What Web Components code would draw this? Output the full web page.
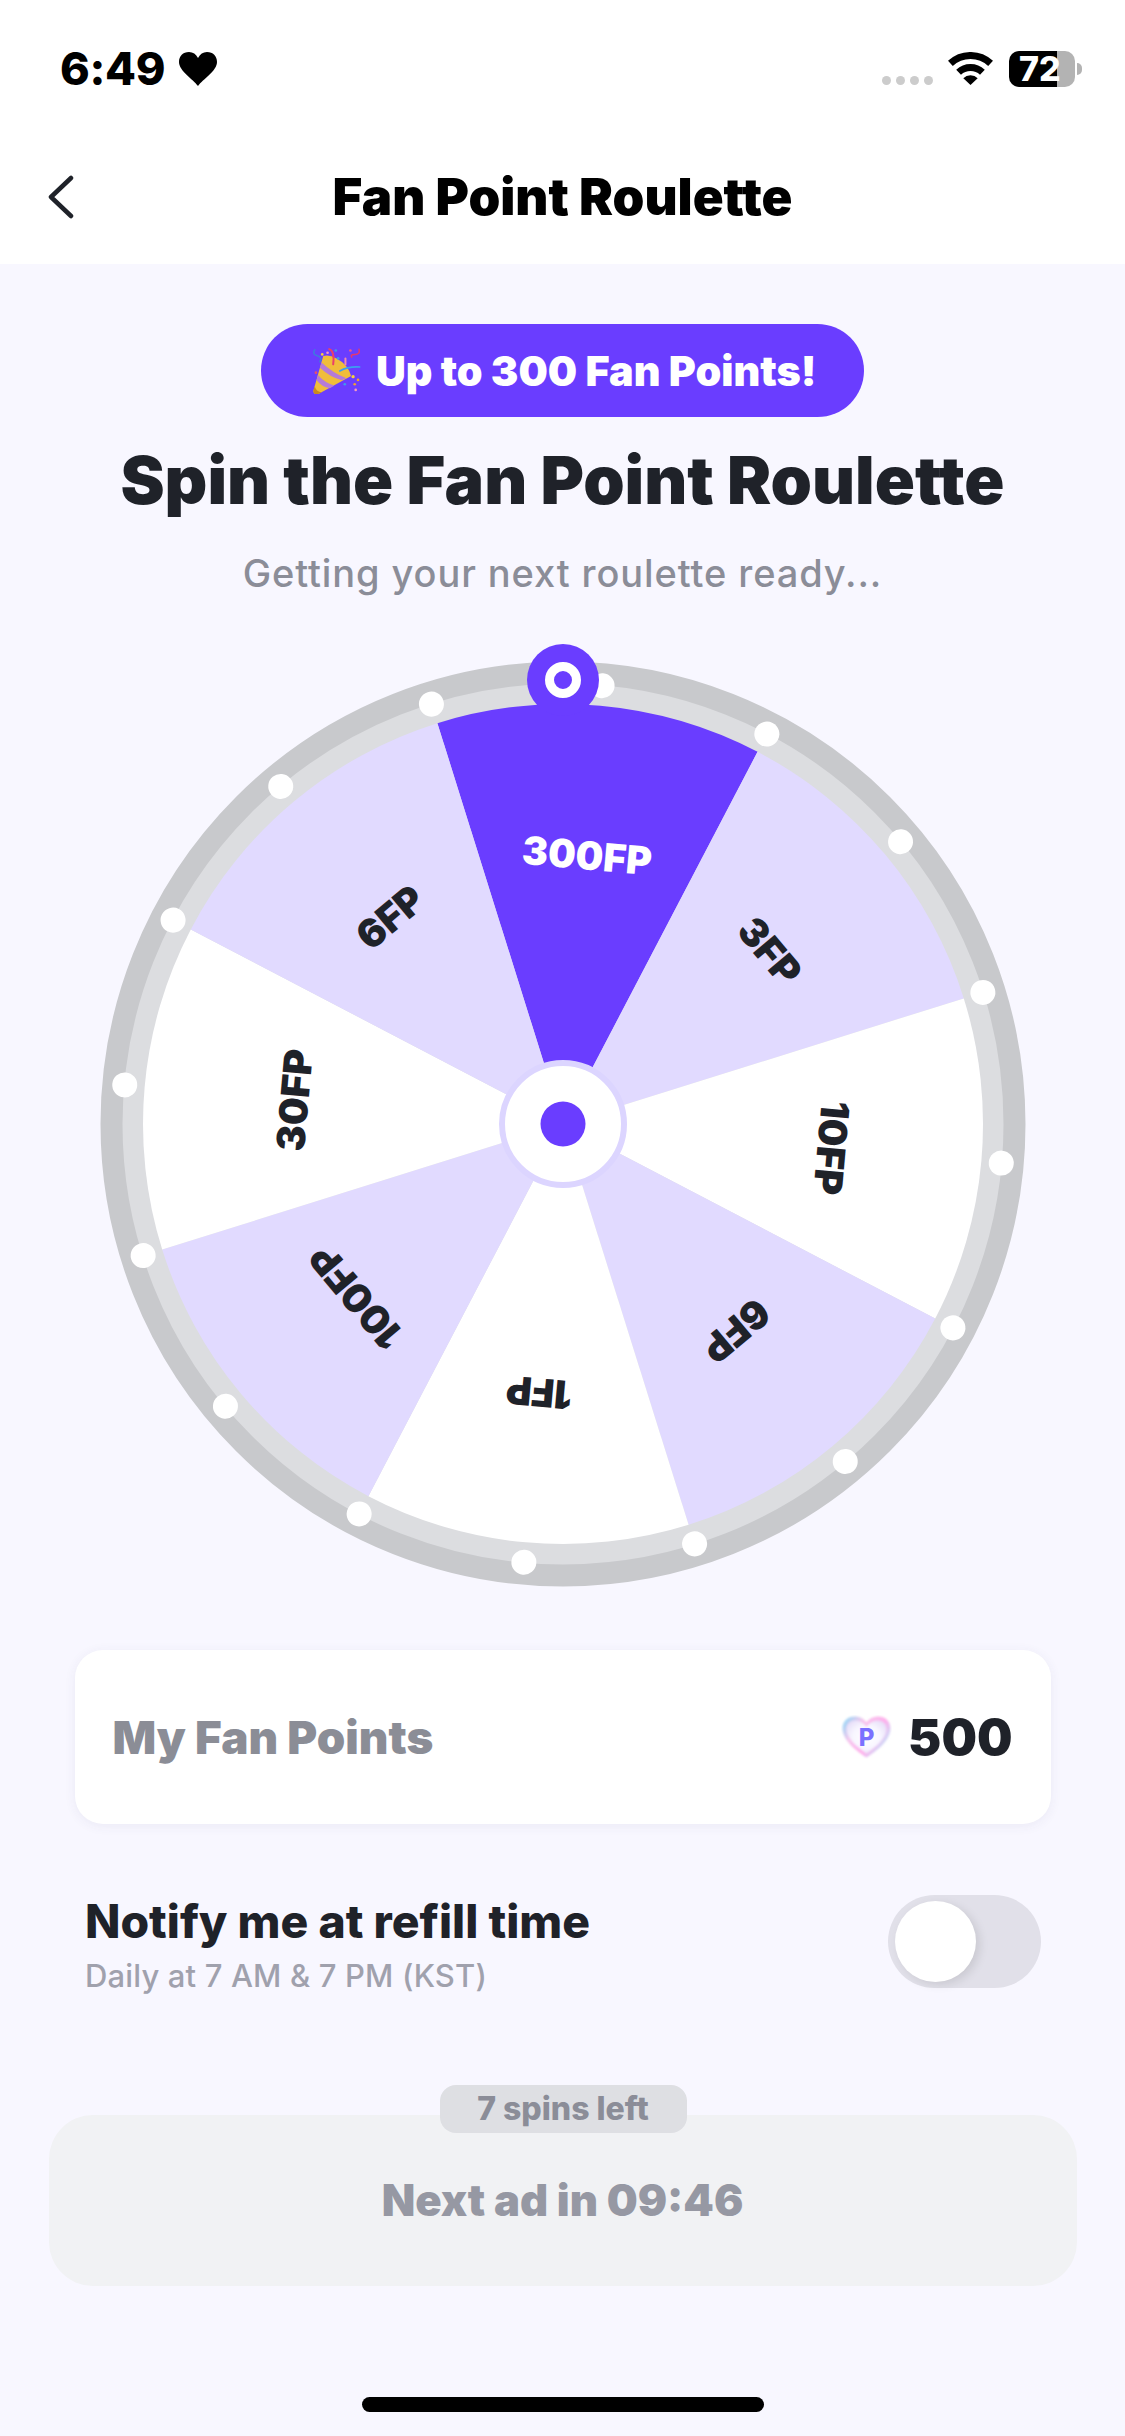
<!DOCTYPE html>
<html lang="en">
<head>
<meta charset="utf-8">
<title>Fan Point Roulette</title>
<style>
  html, body { margin: 0; padding: 0; background: #f8f7ff; }
  body { width: 1125px; height: 2436px; overflow: hidden; font-family: Inter, "Liberation Sans", sans-serif; }
  main { display: flex; flex-direction: column; align-items: center; }
</style>
</head>
<body>
<status-bar time="6:49" battery="72"></status-bar>
<nav-bar>Fan Point Roulette</nav-bar>
<main>
  <promo-pill>Up to 300 Fan Points!</promo-pill>
  <hero-title sub="Getting your next roulette ready...">Spin the Fan Point Roulette</hero-title>
  <fan-wheel></fan-wheel>
  <points-card points="500">My Fan Points</points-card>
  <notify-row sub="Daily at 7 AM &amp; 7 PM (KST)">Notify me at refill time</notify-row>
  <ad-button badge="7 spins left">Next ad in 09:46</ad-button>
</main>
<home-bar></home-bar>

<script>
const FONT = 'Inter, "Liberation Sans", sans-serif';

class StatusBar extends HTMLElement {
  connectedCallback() {
    const time = this.getAttribute('time');
    const battery = this.getAttribute('battery');
    this.attachShadow({ mode: 'open' }).innerHTML = `
      <style>
        :host { display: flex; align-items: flex-start; justify-content: space-between; height: 129px; background: #fff; padding: 51px 43px 0 60px; box-sizing: border-box; font-family: ${FONT}; color: #000; }
        .left { display: flex; align-items: center; gap: 14px; height: 36px; }
        .time { font-size: 45px; font-weight: 800; line-height: 36px; letter-spacing: -0.3px; }
        .right { display: flex; align-items: flex-start; }
        .dots { display: flex; gap: 5px; margin-top: 25px; }
        .dots i { width: 9px; height: 9px; border-radius: 50%; background: #ccc; }
        .wifi { margin: 1px 16px 0 15px; }
        .battery { width: 66px; height: 36px; border-radius: 10px; background: linear-gradient(to right, #000 73%, #b3b3b3 73%); color: #fff; font-size: 34px; font-weight: 800; line-height: 36px; padding-left: 10px; box-sizing: border-box; }
        .nub { width: 5px; height: 12px; margin: 12px 0 0 2px; background: #b3b3b3; border-radius: 0 6px 6px 0; }
      </style>
      <div class="left">
        <span class="time">${time}</span>
        <svg width="38" height="34" viewBox="0 0 38 34"><path d="M19 34C14 27 0 19 0 10 0 4 4 0 10 0c4 0 7 2 9 6 2-4 5-6 9-6 6 0 10 4 10 10 0 9-14 17-19 24z" fill="#000"/></svg>
      </div>
      <div class="right">
        <div class="dots"><i></i><i></i><i></i><i></i></div>
        <svg class="wifi" width="45" height="33" viewBox="0 0 45 33" fill="none" stroke="#000">
          <path d="M2.4 11.4A29.5 29.5 0 0 1 42.6 11.4" stroke-width="7"/>
          <path d="M10.6 20.2A17.5 17.5 0 0 1 34.4 20.2" stroke-width="7"/>
          <path d="M22.5 33L15.3 26.2A10 10 0 0 1 29.7 26.2Z" fill="#000" stroke="none"/>
        </svg>
        <div class="battery">${battery}</div>
        <div class="nub"></div>
      </div>`;
  }
}

class NavBar extends HTMLElement {
  constructor() {
    super();
    this.attachShadow({ mode: 'open' }).innerHTML = `
      <style>
        :host { display: flex; align-items: center; justify-content: center; position: relative; height: 135px; box-sizing: border-box; background: #fff; font-family: ${FONT}; }
        .title { font-size: 51px; font-weight: 900; color: #000; }
        svg { position: absolute; left: 46px; top: 46px; }
      </style>
      <svg width="28" height="44" viewBox="0 0 28 44" fill="none"><path d="M25 3L5 22l20 19" stroke="#1f2229" stroke-width="4.5" stroke-linecap="round" stroke-linejoin="round"/></svg>
      <div class="title"><slot></slot></div>`;
  }
}

class PromoPill extends HTMLElement {
  constructor() {
    super();
    this.attachShadow({ mode: 'open' }).innerHTML = `
      <style>
        :host { display: flex; align-items: center; gap: 13px; box-sizing: border-box; width: 603px; height: 93px; margin-top: 60px; padding-left: 49px; border-radius: 47px; background: #6a3dff; color: #fff; font-family: ${FONT}; font-size: 41.3px; font-weight: 900; white-space: nowrap; }
      </style>
      <svg width="53" height="50" viewBox="90 75 160 150">
        <path d="M130 105L100 210Q102 224 118 218L214 165Q205 130 170 112 148 100 130 105Z" fill="#f0bd3a"/>
        <path d="M100 210Q102 224 118 218L125 214Q110 214 104 196Z" fill="#c98a1e"/>
        <path d="M120 140Q150 168 186 178L200 172Q158 155 125 124Z" fill="#b57bd8"/>
        <path d="M110 178Q125 198 150 202L164 194Q135 186 114 162Z" fill="#b57bd8"/>
        <path d="M148 84Q165 90 160 130" fill="none" stroke="#ea3f6b" stroke-width="6" stroke-linecap="round"/>
        <path d="M104 86Q96 100 112 104T120 122" fill="none" stroke="#3f78e0" stroke-width="5" stroke-linecap="round"/>
        <path d="M180 150Q205 136 240 138" fill="none" stroke="#3ba0f0" stroke-width="5" stroke-linecap="round"/>
        <path d="M238 84Q242 100 226 100T216 108" fill="none" stroke="#e8386a" stroke-width="4.5" stroke-linecap="round"/>
        <path d="M197 112V130" stroke="#f08bb0" stroke-width="6" stroke-linecap="round"/>
        <g>
          <circle cx="127" cy="100" r="4" fill="#f7d23e"/><circle cx="220" cy="167" r="5" fill="#f7d23e"/>
          <circle cx="235" cy="177" r="4" fill="#f0a030"/><circle cx="225" cy="190" r="4" fill="#f0a030"/>
          <circle cx="228" cy="207" r="4" fill="#f59ac0"/><circle cx="212" cy="88" r="4" fill="#ec5a8a"/>
          <circle cx="143" cy="95" r="4" fill="#f59ac0"/><circle cx="168" cy="88" r="4" fill="#3f9be8"/>
          <circle cx="175" cy="112" r="4" fill="#3f9be8"/><circle cx="195" cy="190" r="4" fill="#3f9be8"/>
          <circle cx="108" cy="155" r="4" fill="#e8506a"/>
        </g>
      </svg>
      <span><slot></slot></span>`;
  }
}

class HeroTitle extends HTMLElement {
  connectedCallback() {
    this.attachShadow({ mode: 'open' }).innerHTML = `
      <style>
        :host { display: flex; flex-direction: column; align-items: center; font-family: ${FONT}; white-space: nowrap; }
        h1 { margin: 24px 0 0; font-size: 66.3px; line-height: 78px; font-weight: 900; color: #1f2229; }
        p { margin: 32px 0 0; font-size: 38px; line-height: 44px; font-weight: 500; color: #8b8d98; letter-spacing: 0.9px; }
      </style>
      <h1><slot></slot></h1>
      <p>${this.getAttribute('sub')}</p>`;
  }
}

class FanWheel extends HTMLElement {
  connectedCallback() {
    const cx = 480, cy = 483, R = 420, offset = 5.1;
    const rad = a => (a - 90) * Math.PI / 180;
    const pt = (r, a) => `${(cx + r * Math.cos(rad(a))).toFixed(2)} ${(cy + r * Math.sin(rad(a))).toFixed(2)}`;
    const sectors = [
      ['300FP', '#6a3dff', '#fff'],
      ['3FP', '#e1daff', '#1f2229'],
      ['10FP', '#fff', '#1f2229'],
      ['6FP', '#e1daff', '#1f2229'],
      ['1FP', '#fff', '#1f2229'],
      ['100FP', '#e1daff', '#1f2229'],
      ['30FP', '#fff', '#1f2229'],
      ['6FP', '#e1daff', '#1f2229'],
    ];
    const slices = sectors.map(([label, fill], i) => {
      const a = offset + i * 45;
      return `<path d="M${cx} ${cy}L${pt(R, a - 22.5)}A${R} ${R} 0 0 1 ${pt(R, a + 22.5)}Z" fill="${fill}"/>`;
    }).join('');
    const labels = sectors.map(([label, , color], i) => {
      const a = offset + i * 45;
      return `<text x="${cx}" y="${cy - 270}" transform="rotate(${a} ${cx} ${cy})" fill="${color}">${label}</text>`;
    }).join('');
    let dots = '';
    for (let i = 0; i < 16; i++) {
      dots += `<circle cx="${cx}" cy="${cy - 440}" r="12.5" fill="#fff" transform="rotate(${offset + i * 22.5} ${cx} ${cy})"/>`;
    }
    this.attachShadow({ mode: 'open' }).innerHTML = `
      <style>
        :host { display: block; width: 960px; height: 950px; margin-top: 46px; }
        svg { display: block; }
        text { font-family: ${FONT}; font-size: 39px; font-weight: 900; text-anchor: middle; dominant-baseline: central; }
      </style>
      <svg width="960" height="950" viewBox="0 0 960 950">
        <circle cx="${cx}" cy="${cy}" r="451.5" fill="#dcdde0" stroke="#c8c9cc" stroke-width="22"/>
        ${dots}
        ${slices}
        ${labels}
        <circle cx="${cx}" cy="${cy}" r="61" fill="#fff" stroke="#dcd5ff" stroke-width="6"/>
        <circle cx="${cx}" cy="${cy}" r="22.5" fill="#6a3dff"/>
        <circle cx="${cx}" cy="39" r="36" fill="#6a3dff"/>
        <circle cx="${cx}" cy="39" r="13.5" fill="#6a3dff" stroke="#fff" stroke-width="9"/>
      </svg>`;
  }
}

class PointsCard extends HTMLElement {
  connectedCallback() {
    this.attachShadow({ mode: 'open' }).innerHTML = `
      <style>
        :host { display: flex; align-items: center; box-sizing: border-box; width: 976px; height: 174px; margin-top: 59px; padding: 0 38px; border-radius: 28px; background: #fff; box-shadow: 0 2px 12px rgba(60,50,120,0.07); font-family: ${FONT}; }
        .label { flex: 1; font-size: 45.7px; font-weight: 900; color: #8b8d96; }
        .value { margin-left: 16px; font-size: 50px; font-weight: 900; color: #1f2229; }
        .p { font-size: 24px; font-weight: 800; fill: #7b70ff; font-family: ${FONT}; text-anchor: middle; }
      </style>
      <span class="label"><slot></slot></span>
      <svg width="51" height="44" viewBox="0 0 51 44">
        <defs>
          <radialGradient id="core" cx="50%" cy="50%" r="62%">
            <stop offset="0" stop-color="#fff"/><stop offset="0.55" stop-color="#f8f6ff"/><stop offset="1" stop-color="#e6dcf8"/>
          </radialGradient>
          <linearGradient id="rim" x1="0" y1="0" x2="1" y2="0.6">
            <stop offset="0" stop-color="#86dcf8"/><stop offset="0.35" stop-color="#f6c6ee"/><stop offset="0.7" stop-color="#ffb0ec"/><stop offset="1" stop-color="#c0e4fa"/>
          </linearGradient>
          <filter id="soft" x="-10%" y="-10%" width="120%" height="120%"><feGaussianBlur stdDeviation="0.9"/></filter>
        </defs>
        <path d="M25.5 42.5C17 37 1.5 26 1.5 13.5 1.5 6 7 1.5 13.5 1.5c5 0 9.500 2 12 6 2.500-4 7-6 12-6 6.500 0 12 4.500 12 12 0 12.500-15.500 23.500-24 29z" fill="url(#rim)" filter="url(#soft)"/>
        <path d="M25.5 38.5C18 33.5 5.5 24 5.5 14 5.5 9 9 5.500 14 5.500c5 0 9 2.500 11.500 6.500 2.500-4 6.500-6.500 11.500-6.500 5 0 8.500 3.500 8.500 8.500 0 10-12.500 19.500-20 24.500z" fill="url(#core)" filter="url(#soft)"/>
        <text class="p" x="25.5" y="31">P</text>
      </svg>
      <span class="value">${this.getAttribute('points')}</span>`;
  }
}

class NotifyRow extends HTMLElement {
  connectedCallback() {
    this.attachShadow({ mode: 'open' }).innerHTML = `
      <style>
        :host { display: flex; align-items: center; box-sizing: border-box; width: 1125px; height: 93px; margin-top: 71px; padding: 0 84px 0 85px; font-family: ${FONT}; }
        .text { flex: 1; padding-top: 6px; }
        .title { font-size: 46.3px; line-height: 52px; font-weight: 800; color: #1f2229; }
        .sub { margin-top: 11px; font-size: 31px; line-height: 36px; font-weight: 500; color: #a0a1ad; letter-spacing: 0.15px; }
        toggle-switch { flex: none; }
      </style>
      <div class="text">
        <div class="title"><slot></slot></div>
        <div class="sub">${this.getAttribute('sub').replace('&', '&amp;')}</div>
      </div>
      <toggle-switch></toggle-switch>`;
  }
}

class ToggleSwitch extends HTMLElement {
  constructor() {
    super();
    this.attachShadow({ mode: 'open' }).innerHTML = `
      <style>
        :host { display: block; box-sizing: border-box; width: 153px; height: 93px; padding: 6px 7px; border-radius: 47px; background: #e1e0e9; }
        .knob { width: 81px; height: 81px; border-radius: 50%; background: #fff; box-shadow: 4px 3px 10px rgba(0,0,0,0.1); }
      </style>
      <div class="knob"></div>`;
  }
}

class AdButton extends HTMLElement {
  connectedCallback() {
    this.attachShadow({ mode: 'open' }).innerHTML = `
      <style>
        :host { display: flex; align-items: center; justify-content: center; position: relative; box-sizing: border-box; width: 1028px; height: 171px; margin-top: 127px; border-radius: 44px; background: #f1f2f4; font-family: ${FONT}; font-size: 43.6px; font-weight: 900; color: #9698a3; }
        .badge { position: absolute; left: 391px; top: -30px; width: 247px; height: 48px; border-radius: 16px; background: #dedfe3; color: #8b8d98; font-size: 32px; font-weight: 800; line-height: 48px; text-align: center; }
      </style>
      <div class="badge">${this.getAttribute('badge')}</div>
      <span><slot></slot></span>`;
  }
}

class HomeBar extends HTMLElement {
  constructor() {
    super();
    this.attachShadow({ mode: 'open' }).innerHTML = `
      <style>
        :host { display: block; width: 402px; height: 15px; margin: 111px auto 0; border-radius: 8px; background: #000; }
      </style>`;
  }
}

customElements.define('status-bar', StatusBar);
customElements.define('nav-bar', NavBar);
customElements.define('promo-pill', PromoPill);
customElements.define('hero-title', HeroTitle);
customElements.define('fan-wheel', FanWheel);
customElements.define('points-card', PointsCard);
customElements.define('toggle-switch', ToggleSwitch);
customElements.define('notify-row', NotifyRow);
customElements.define('ad-button', AdButton);
customElements.define('home-bar', HomeBar);
</script>
</body>
</html>
